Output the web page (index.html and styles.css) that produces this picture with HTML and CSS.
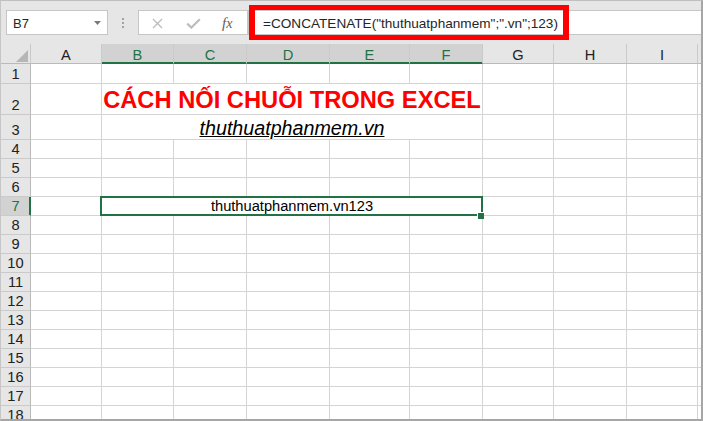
FILE: index.html
```html
<!DOCTYPE html>
<html lang="vi">
<head>
<meta charset="utf-8">
<title>CONCATENATE - Excel</title>
<link rel="stylesheet" href="styles.css">
</head>
<body>
<div class="frame">
  <div class="toolbar">
    <div class="namebox"><span>B7</span><svg class="dd" width="7" height="4" viewBox="0 0 7 4"><path d="M0 0H7L3.5 4Z" fill="#7a7a7a"/></svg></div>
    <div class="sep"><svg width="2" height="25" viewBox="0 0 2 25"><rect x="0" y="8" width="2" height="2" fill="#a3a3a3"/><rect x="0" y="12" width="2" height="2" fill="#a3a3a3"/><rect x="0" y="16" width="2" height="2" fill="#a3a3a3"/></svg></div>
    <div class="fxbox">
      <svg class="ic-x" width="11" height="11" viewBox="0 0 11 11"><path d="M1 1L10 10M10 1L1 10" stroke="#bdbdbd" stroke-width="1.4" fill="none"/></svg>
      <svg class="ic-ok" width="15" height="11" viewBox="0 0 15 11"><path d="M1.2 5.6L5.4 9.6L13.8 1.2" stroke="#bdbdbd" stroke-width="2.2" fill="none"/></svg>
      <span class="fx">f<span class="fxx">x</span></span>
    </div>
    <div class="formula">=CONCATENATE("thuthuatphanmem";".vn";123)</div>
    <div class="callout"></div>
  </div>
  <div class="sheet">
    <div class="ch corner"><svg width="12" height="12" viewBox="0 0 12 12"><path d="M12 0V12H0Z" fill="#b6b6b6"/></svg></div><div class="ch">A</div><div class="ch sel">B</div><div class="ch sel">C</div><div class="ch sel">D</div><div class="ch sel">E</div><div class="ch sel">F</div><div class="ch">G</div><div class="ch">H</div><div class="ch">I</div><div class="ch j"></div>

    <div class="rh">1</div><div class="c"></div><div class="c"></div><div class="c"></div><div class="c"></div><div class="c"></div><div class="c"></div><div class="c"></div><div class="c"></div><div class="c"></div><div class="c j"></div>
    <div class="rh">2</div><div class="c"></div><div class="c m title">CÁCH NỐI CHUỖI TRONG EXCEL</div><div class="c"></div><div class="c"></div><div class="c"></div><div class="c j"></div>
    <div class="rh">3</div><div class="c"></div><div class="c m sub">thuthuatphanmem.vn</div><div class="c"></div><div class="c"></div><div class="c"></div><div class="c j"></div>
    <div class="rh">4</div><div class="c"></div><div class="c"></div><div class="c"></div><div class="c"></div><div class="c"></div><div class="c"></div><div class="c"></div><div class="c"></div><div class="c"></div><div class="c j"></div>
    <div class="rh">5</div><div class="c"></div><div class="c"></div><div class="c"></div><div class="c"></div><div class="c"></div><div class="c"></div><div class="c"></div><div class="c"></div><div class="c"></div><div class="c j"></div>
    <div class="rh">6</div><div class="c"></div><div class="c"></div><div class="c"></div><div class="c"></div><div class="c"></div><div class="c"></div><div class="c"></div><div class="c"></div><div class="c"></div><div class="c j"></div>
    <div class="rh sel">7</div><div class="c"></div><div class="c m active">thuthuatphanmem.vn123</div><div class="c"></div><div class="c"></div><div class="c"></div><div class="c j"></div>
    <div class="rh">8</div><div class="c"></div><div class="c"></div><div class="c"></div><div class="c"></div><div class="c"></div><div class="c"></div><div class="c"></div><div class="c"></div><div class="c"></div><div class="c j"></div>
    <div class="rh">9</div><div class="c"></div><div class="c"></div><div class="c"></div><div class="c"></div><div class="c"></div><div class="c"></div><div class="c"></div><div class="c"></div><div class="c"></div><div class="c j"></div>
    <div class="rh">10</div><div class="c"></div><div class="c"></div><div class="c"></div><div class="c"></div><div class="c"></div><div class="c"></div><div class="c"></div><div class="c"></div><div class="c"></div><div class="c j"></div>
    <div class="rh">11</div><div class="c"></div><div class="c"></div><div class="c"></div><div class="c"></div><div class="c"></div><div class="c"></div><div class="c"></div><div class="c"></div><div class="c"></div><div class="c j"></div>
    <div class="rh">12</div><div class="c"></div><div class="c"></div><div class="c"></div><div class="c"></div><div class="c"></div><div class="c"></div><div class="c"></div><div class="c"></div><div class="c"></div><div class="c j"></div>
    <div class="rh">13</div><div class="c"></div><div class="c"></div><div class="c"></div><div class="c"></div><div class="c"></div><div class="c"></div><div class="c"></div><div class="c"></div><div class="c"></div><div class="c j"></div>
    <div class="rh">14</div><div class="c"></div><div class="c"></div><div class="c"></div><div class="c"></div><div class="c"></div><div class="c"></div><div class="c"></div><div class="c"></div><div class="c"></div><div class="c j"></div>
    <div class="rh">15</div><div class="c"></div><div class="c"></div><div class="c"></div><div class="c"></div><div class="c"></div><div class="c"></div><div class="c"></div><div class="c"></div><div class="c"></div><div class="c j"></div>
    <div class="rh">16</div><div class="c"></div><div class="c"></div><div class="c"></div><div class="c"></div><div class="c"></div><div class="c"></div><div class="c"></div><div class="c"></div><div class="c"></div><div class="c j"></div>
    <div class="rh">17</div><div class="c"></div><div class="c"></div><div class="c"></div><div class="c"></div><div class="c"></div><div class="c"></div><div class="c"></div><div class="c"></div><div class="c"></div><div class="c j"></div>
    <div class="rh">18</div><div class="c"></div><div class="c"></div><div class="c"></div><div class="c"></div><div class="c"></div><div class="c"></div><div class="c"></div><div class="c"></div><div class="c"></div><div class="c j"></div>
  </div>
</div>
</body>
</html>
```

FILE: styles.css
```css
body {
  margin: 0;
  background: #ffffff;
  font-family: "Liberation Sans", Arial, sans-serif;
}

.frame {
  width: 703px;
  height: 421px;
  box-sizing: border-box;
  border-top: 1px solid #bfbfbf;
  border-left: 1px solid #c6c6c6;
  border-right: 2px solid #a6a6a6;
  border-bottom: 2px solid #a6a6a6;
  overflow: hidden;
  background: #e6e6e6;
}

/* ---------- formula bar area ---------- */
.toolbar {
  position: relative;
  height: 43px;
  box-sizing: border-box;
  padding-top: 9px;
  display: flex;
  align-items: flex-start;
  background: #e6e6e6;
}

.namebox {
  margin-left: 5px;
  width: 102px;
  height: 25px;
  box-sizing: border-box;
  border: 1px solid #c6c6c6;
  background: #ffffff;
  display: flex;
  align-items: center;
  justify-content: space-between;
  padding: 1px 6px 0 6px;
  font-size: 13px;
  color: #262626;
}

.sep {
  width: 30px;
  height: 25px;
  display: flex;
  justify-content: center;
}

.fxbox {
  width: 110px;
  height: 25px;
  box-sizing: border-box;
  border: 1px solid #c6c6c6;
  background: #ffffff;
  display: flex;
  align-items: center;
  padding: 2px 0 0 13px;
}

.ic-ok {
  margin-left: 23px;
}

.fx {
  margin-left: 21px;
  font-family: "Liberation Serif", "Times New Roman", serif;
  font-style: italic;
  font-size: 15px;
  color: #606060;
  line-height: 15px;
}

.fxx {
  font-size: 14px;
}

.formula {
  width: 453px;
  height: 25px;
  box-sizing: border-box;
  border: 1px solid #c6c6c6;
  border-right: 0;
  background: #ffffff;
  display: flex;
  align-items: center;
  padding: 2px 0 0 14px;
  font-size: 13.6px;
  color: #262626;
  white-space: nowrap;
}

.callout {
  position: absolute;
  left: 248px;
  top: 4px;
  width: 320px;
  height: 35px;
  box-sizing: border-box;
  border: 5px solid #ff0000;
  border-left-width: 6px;
  border-right-width: 6px;
}

/* ---------- grid ---------- */
.sheet {
  display: grid;
  grid-template-columns: 30px 71px 72px 73px 83px 80px 73px 71px 73px 71px 3px;
  grid-template-rows: 20px 20px 31px 25px repeat(15, 19px);
  height: 375px;
  overflow: hidden;
  background: #ffffff;
  font-size: 14.67px;
}

.sheet > div {
  box-sizing: border-box;
  display: flex;
  align-items: flex-end;
  justify-content: center;
  white-space: nowrap;
  line-height: 17px;
  min-width: 0;
}

.c {
  border-right: 1px solid #d4d4d4;
  border-bottom: 1px solid #d4d4d4;
  background: #ffffff;
  color: #000000;
}

.ch {
  background: #e6e6e6;
  border-right: 1px solid #cacaca;
  border-bottom: 1px solid #bababa;
  color: #222222;
}

.sheet > .ch {
  line-height: 15px;
}

.ch.sel {
  background: #d2d2d2;
  color: #217346;
  border-bottom-color: #217346;
  box-shadow: inset 0 -1px 0 #217346;
}

.sheet > .corner {
  justify-content: flex-end;
  padding: 0 2px 1px 0;
}

.rh {
  background: #e6e6e6;
  border-right: 1px solid #bababa;
  border-bottom: 1px solid #cacaca;
  color: #222222;
}

.rh.sel {
  background: #d2d2d2;
  color: #217346;
  border-right-color: #217346;
  box-shadow: inset -1px 0 0 #217346;
}

.sheet > .j {
  border-right: 0;
}

.m {
  grid-column: span 5;
}

.sheet > .title {
  font-weight: 700;
  font-size: 23.7px;
  color: #ff0000;
  line-height: 27px;
}

.sheet > .sub {
  font-style: italic;
  text-decoration: underline;
  font-size: 19.7px;
  line-height: 22px;
}

.active {
  position: relative;
  overflow: visible;
}

.active::after {
  content: "";
  position: absolute;
  left: -2px;
  top: -1px;
  right: -1px;
  bottom: -1px;
  border: 2px solid #217346;
  box-sizing: border-box;
}

.active::before {
  content: "";
  position: absolute;
  left: 375px;
  top: 15px;
  width: 6px;
  height: 6px;
  background: #217346;
  border-top: 1px solid #ffffff;
  border-left: 1px solid #ffffff;
  z-index: 1;
}
```
